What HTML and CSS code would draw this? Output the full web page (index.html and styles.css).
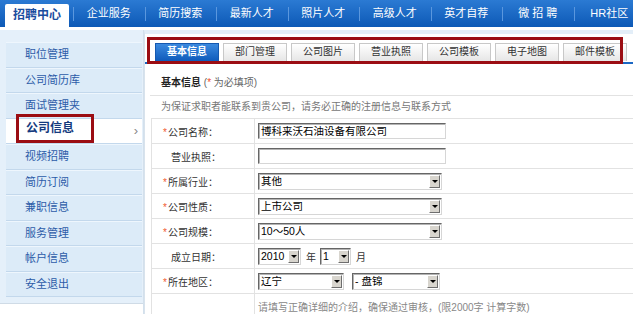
FILE: index.html
```html
<!DOCTYPE html>
<html lang="zh-CN">

<head>
  <meta charset="UTF-8">
  <meta name="viewport" content="width=device-width, initial-scale=1.0">
  <link rel="stylesheet" href="styles.css">
  <title>招聘中心 - 公司信息</title>
</head>

<body>

  <div class="topnav">
    <a class="nav-item active">招聘中心</a>
    <a class="nav-item">企业服务</a>
    <a class="nav-item">简历搜索</a>
    <a class="nav-item">最新人才</a>
    <a class="nav-item">照片人才</a>
    <a class="nav-item">高级人才</a>
    <a class="nav-item">英才自荐</a>
    <a class="nav-item">微 招 聘</a>
    <a class="nav-item">HR社区</a>
  </div>

  <div class="page">
    <aside class="sidebar">
      <ul class="side-menu">
        <li>职位管理</li>
        <li>公司简历库</li>
        <li>面试管理夹</li>
        <li class="current"><span class="mark">公司信息</span><i class="chevron">›</i></li>
        <li>视频招聘</li>
        <li>简历订阅</li>
        <li>兼职信息</li>
        <li>服务管理</li>
        <li>帐户信息</li>
        <li>安全退出</li>
      </ul>
      <div class="side-foot"></div>
    </aside>

    <main class="main">
      <div class="tabbar">
        <ul class="tabs">
          <li class="on">基本信息</li>
          <li>部门管理</li>
          <li>公司图片</li>
          <li>营业执照</li>
          <li>公司模板</li>
          <li>电子地图</li>
          <li>邮件模板</li>
        </ul>
      </div>

      <h2 class="section-title">基本信息 <span class="hint">(<em>*</em> 为必填项)</span></h2>
      <p class="notice">为保证求职者能联系到贵公司，请务必正确的注册信息与联系方式</p>

      <table class="form">
        <tr>
          <th><em>*</em>公司名称：</th>
          <td><span class="text-input">博科来沃石油设备有限公司</span></td>
        </tr>
        <tr>
          <th class="plain">营业执照：</th>
          <td><span class="text-input"></span></td>
        </tr>
        <tr>
          <th><em>*</em>所属行业：</th>
          <td><span class="select wide"><span class="val">其他</span><i class="drop"></i></span></td>
        </tr>
        <tr>
          <th><em>*</em>公司性质：</th>
          <td><span class="select wide"><span class="val">上市公司</span><i class="drop"></i></span></td>
        </tr>
        <tr>
          <th><em>*</em>公司规模：</th>
          <td><span class="select wide"><span class="val">10～50人</span><i class="drop"></i></span></td>
        </tr>
        <tr>
          <th class="plain">成立日期：</th>
          <td>
            <span class="select year"><span class="val">2010</span><i class="drop"></i></span>
            <span class="unit">年</span>
            <span class="select month"><span class="val">1</span><i class="drop"></i></span>
            <span class="unit">月</span>
          </td>
        </tr>
        <tr>
          <th><em>*</em>所在地区：</th>
          <td>
            <span class="select province"><span class="val">辽宁</span><i class="drop"></i></span>
            <span class="select city"><span class="val">- 盘锦</span><i class="drop"></i></span>
          </td>
        </tr>
        <tr>
          <th></th>
          <td class="tip">请填写正确详细的介绍，确保通过审核，(限2000字 计算字数)</td>
        </tr>
      </table>
    </main>
  </div>

</body>

</html>
```

FILE: styles.css
```css
* {
  margin: 0;
  padding: 0;
  box-sizing: border-box;
}

body {
  font-family: 'Liberation Sans', 'Noto Sans CJK SC', sans-serif;
  font-size: 10px;
  color: #333;
  background: #fff;
  width: 633px;
  overflow: hidden;
}

ul {
  list-style: none;
}

em,
i {
  font-style: normal;
}

/* top navigation */
.topnav {
  display: flex;
  height: 27px;
  padding-left: 5px;
  background: linear-gradient(#2b7ad3, #0d59b6);
}

.nav-item {
  flex-shrink: 0;
  width: 71.5px;
  height: 27px;
  line-height: 27px;
  text-align: center;
  color: #fff;
  font-size: 11px;
  background: linear-gradient(#5a97de, #5a97de) left center / 1px 14px no-repeat;
}

.nav-item.active {
  width: 64px;
  height: 23px;
  margin: 4px 4px 0 0;
  line-height: 23px;
  background: #fff;
  color: #1a4d9e;
  font-size: 12px;
  font-weight: bold;
  border-radius: 2px 2px 0 0;
}

.page {
  display: flex;
  margin-top: 3px;
}

/* left menu */
.sidebar {
  width: 144px;
  flex-shrink: 0;
  padding: 12px 1px 0 6px;
  background: #e5f0fa;
  border-right: 1px solid #d3e0ec;
}

.side-menu li {
  display: flex;
  height: 26px;
  padding-left: 19px;
  line-height: 25px;
  font-size: 11px;
  color: #2c5ca8;
  background: #dcebf8;
  border-bottom: 1px solid #c3d8ec;
  box-shadow: inset 0 1px 0 #eef6fd;
}

.side-menu li:nth-child(even) {
  height: 25px;
  line-height: 24px;
}

.side-menu li.current {
  align-items: flex-end;
  padding-left: 10px;
  background: #fff;
  box-shadow: none;
}

.mark {
  display: block;
  height: 29px;
  padding: 0 17px 0 7px;
  line-height: 23px;
  border: 3px solid #9b0d13;
  font-size: 12px;
  font-weight: bold;
  color: #143a7e;
}

.chevron {
  align-self: center;
  margin-left: auto;
  margin-right: 4px;
  font-size: 13px;
  color: #888;
}

.side-foot {
  height: 20px;
  margin: 6px -1px 0 -6px;
  background: #fff;
  border-top: 1px solid #cfdbe6;
}

/* main panel */
.main {
  flex: 1;
  min-height: 284px;
  border-top: 4px solid #e3eef8;
  border-left: 1px solid #d8e3ed;
}

.tabbar {
  height: 30px;
  padding: 6px 0 0 5px;
  border-bottom: 2px solid #1c68c4;
}

.tabs {
  display: flex;
  gap: 4px;
  width: 470px;
  height: 21px;
  padding: 3px 0 0 5px;
  outline: 3px solid #9b0d13;
}

.tabs li {
  flex-shrink: 0;
  width: 64px;
  height: 18px;
  line-height: 16px;
  text-align: center;
  color: #333;
  background: linear-gradient(#ffffff, #e6e6e6);
  border: 1px solid #c8c8c8;
  border-bottom: 0;
}

.tabs li.on {
  color: #fff;
  font-weight: bold;
  background: linear-gradient(#3b89df, #0f5bbb);
  border-color: #1559b0;
}

.section-title {
  height: 32px;
  margin-left: 5px;
  padding: 6px 0 0 11px;
  line-height: 25px;
  font-size: 10px;
  color: #222;
  border-bottom: 1px solid #e2e2e2;
}

.hint {
  font-weight: normal;
  color: #666;
}

.hint em {
  color: #f04a2a;
}

.notice {
  padding-left: 16px;
  line-height: 22px;
  color: #777;
}

/* form */
.form {
  width: 482px;
  margin-left: 6px;
  border-collapse: collapse;
  border-left: 1px solid #e2e2e2;
}

.form th,
.form td {
  height: 25px;
  border-top: 1px solid #e2e2e2;
  font-weight: normal;
  text-align: left;
  white-space: nowrap;
}

.form th {
  width: 103px;
  padding-left: 11px;
  color: #333;
  border-right: 1px solid #e2e2e2;
}

.form th em {
  margin-right: 1px;
  color: #f05a30;
}

.form th.plain {
  padding-left: 19px;
}

.form td {
  padding-left: 3px;
  font-size: 0;
}

.form td.tip {
  height: 22px;
  font-size: 10px;
  color: #888;
}

.text-input {
  display: inline-block;
  vertical-align: middle;
  width: 188px;
  height: 16px;
  padding-left: 2px;
  line-height: 14px;
  font-size: 10.5px;
  color: #000;
  border: 1px solid;
  border-color: #666 #d6d6d6 #d6d6d6 #666;
  box-shadow: inset 1px 1px 0 #b4b4b4;
}

.select {
  display: inline-flex;
  align-items: center;
  vertical-align: middle;
  height: 17px;
  padding: 0 1px 0 2px;
  font-size: 10.5px;
  color: #000;
  border: 1px solid;
  border-color: #666 #d6d6d6 #d6d6d6 #666;
  box-shadow: inset 1px 1px 0 #b4b4b4;
}

.select .val {
  flex: 1;
  line-height: 14px;
}

.drop {
  display: flex;
  align-items: center;
  justify-content: center;
  width: 11px;
  height: 13px;
  background: #d8d5ce;
  border: 1px solid;
  border-color: #fff #6e6e6e #6e6e6e #fff;
}

.drop::after {
  content: '';
  border: 3px solid transparent;
  border-top: 3px solid #000;
  border-bottom: 0;
}

.wide {
  width: 184px;
}

.year {
  width: 43px;
}

.month {
  width: 31px;
}

.province {
  width: 86px;
}

.city {
  width: 88px;
  margin-left: 8px;
}

.unit {
  display: inline-block;
  vertical-align: middle;
  margin: 0 4px 0 5px;
  font-size: 10px;
  color: #333;
}
```
